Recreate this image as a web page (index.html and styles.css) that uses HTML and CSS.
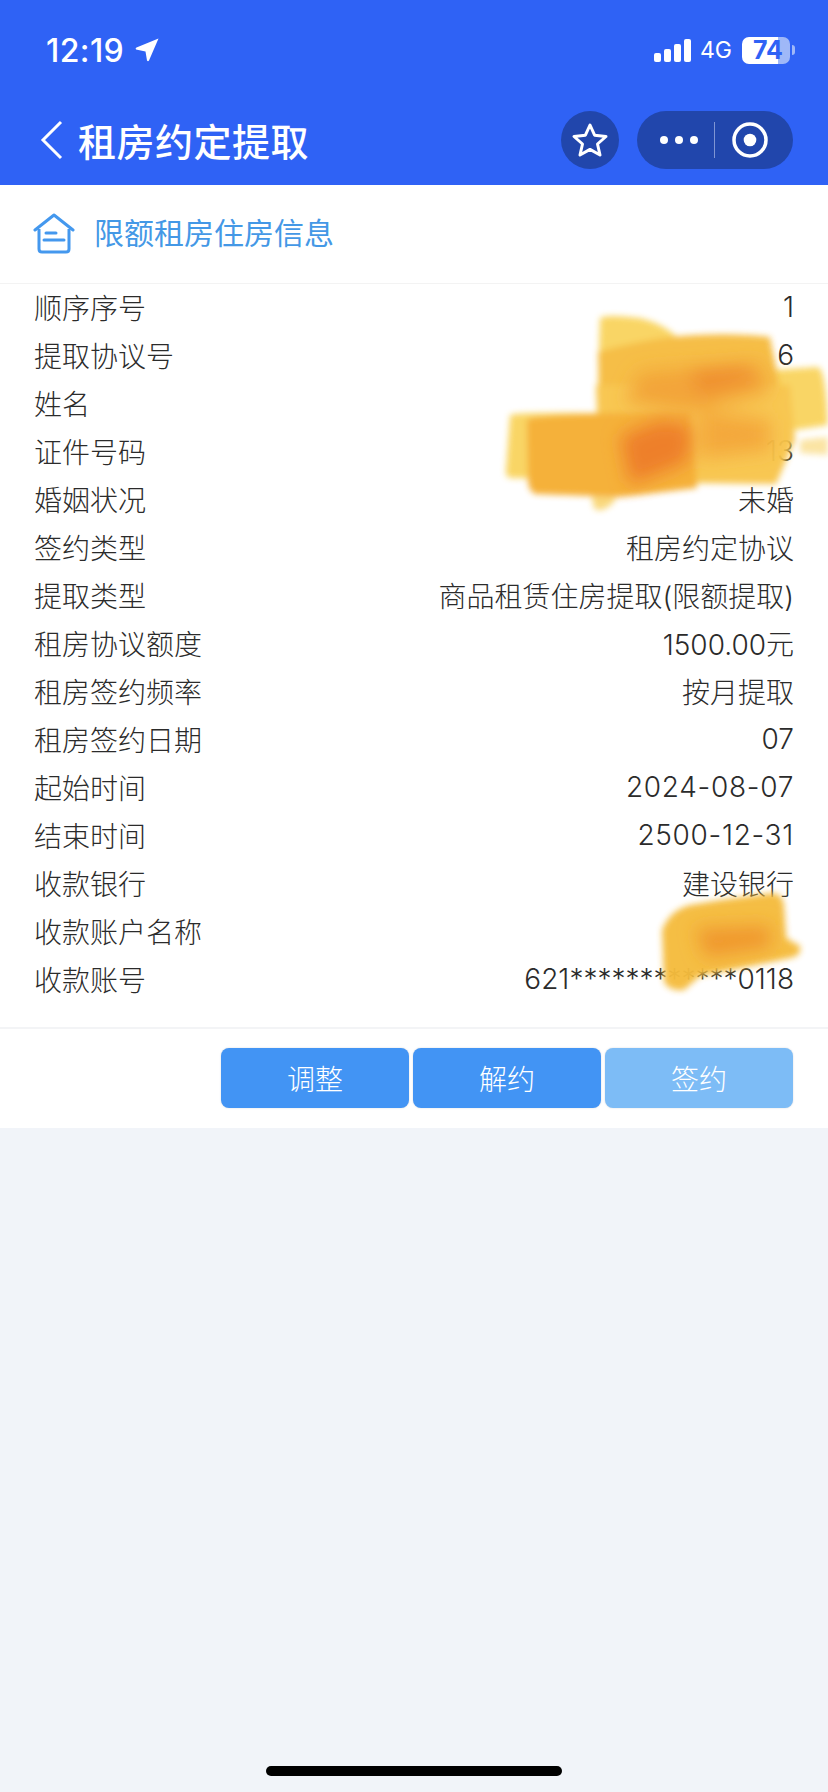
FILE: index.html
```html
<!DOCTYPE html>
<html lang="zh-CN">

<head>
    <meta charset="UTF-8" />
    <title>租房约定提取</title>
    <link rel="stylesheet" href="styles.css">
</head>

<body>
    <div class="page">
        <div class="topbar">
            <div class="status">
                <div class="status-left">
                    <span class="time">12:19</span>
                    <svg class="arrow" width="26" height="26" viewBox="0 0 26 26">
                        <path d="M24.500 1.500 L15 23.500 Q14 25 13 23.500 L11.500 14.500 L2 12.500 Q1 11 2.500 10.500 Z" fill="#fff" />
                    </svg>
                </div>
                <div class="status-right">
                    <div class="signal">
                        <span class="s1"></span>
                        <span class="s2"></span>
                        <span class="s3"></span>
                        <span class="s4"></span>
                    </div>
                    <span class="net">4G</span>
                    <div class="battery">74</div>
                    <span class="nub"></span>
                </div>
            </div>
            <div class="nav">
                <svg class="back" width="24" height="40" viewBox="0 0 24 40">
                    <path d="M21 2 L3 20 L21 38" fill="none" stroke="#fff" stroke-width="3" />
                </svg>
                <h1>租房约定提取</h1>
                <div class="star-btn">
                    <svg width="38" height="36" viewBox="0 0 38 36">
                        <path d="M19 3 L23.600 13.200 L35 14.500 L26.500 22 L29 33 L19 27.400 L9 33 L11.500 22 L3 14.500 L14.400 13.200 Z" fill="none" stroke="#fff" stroke-width="3" stroke-linejoin="round" />
                    </svg>
                </div>
                <div class="capsule">
                    <div class="dots"><i></i><i></i><i></i></div>
                    <span class="sep"></span>
                    <svg width="38" height="38" viewBox="0 0 38 38">
                        <circle cx="19" cy="19" r="16" fill="none" stroke="#fff" stroke-width="3.500" />
                        <circle cx="19" cy="19" r="6.300" fill="#fff" />
                    </svg>
                </div>
            </div>
        </div>

        <div class="card">
            <div class="section-title">
                <svg width="42" height="42" viewBox="0 0 42 42">
                    <path d="M2 18 L21 3 L40 18" fill="none" stroke="#4498ee" stroke-width="3" stroke-linecap="round" stroke-linejoin="round" />
                    <path d="M6 17 V37 Q6 40 9 40 H33 Q36 40 36 37 V17" fill="none" stroke="#4498ee" stroke-width="3" />
                    <path d="M13 21 H23 M11 28 H31" fill="none" stroke="#4498ee" stroke-width="3" stroke-linecap="round" />
                </svg>
                <span class="section-name">限额租房住房信息</span>
            </div>

            <div class="rows">
                <div class="row"><span>顺序序号</span><span>1</span></div>
                <div class="row"><span>提取协议号</span><span>6</span></div>
                <div class="row"><span>姓名</span><span></span></div>
                <div class="row"><span>证件号码</span><span>13</span></div>
                <div class="row"><span>婚姻状况</span><span>未婚</span></div>
                <div class="row"><span>签约类型</span><span>租房约定协议</span></div>
                <div class="row"><span>提取类型</span><span>商品租赁住房提取(限额提取)</span></div>
                <div class="row"><span>租房协议额度</span><span>1500.00元</span></div>
                <div class="row"><span>租房签约频率</span><span>按月提取</span></div>
                <div class="row"><span>租房签约日期</span><span>07</span></div>
                <div class="row"><span>起始时间</span><span class="date">2024-08-07</span></div>
                <div class="row"><span>结束时间</span><span class="date">2500-12-31</span></div>
                <div class="row"><span>收款银行</span><span>建设银行</span></div>
                <div class="row"><span>收款账户名称</span><span></span></div>
                <div class="row"><span>收款账号</span><span>621************0118</span></div>
            </div>

            <div class="actions">
                <button>调整</button>
                <button>解约</button>
                <button class="off">签约</button>
            </div>
        </div>

        <div class="home-bar"><span></span></div>

        <!-- painted-over parts of the screenshot -->
        <svg class="smear" width="828" height="1100" viewBox="0 0 828 1100">
            <defs>
                <filter id="soft" x="-10%" y="-10%" width="120%" height="120%"><feGaussianBlur stdDeviation="3" /></filter>
                <filter id="softer" x="-20%" y="-20%" width="140%" height="140%"><feGaussianBlur stdDeviation="9" /></filter>
            </defs>
            <g filter="url(#soft)">
                <path d="M600 318 Q606 314 640 318 Q665 324 680 340 L690 385 L598 385 Z" fill="#f9d45e" />
                <path d="M775 370 L818 367 Q826 370 828 425 L782 432 Z" fill="#f9d45e" />
                <path d="M800 440 L828 437 V455 L800 453 Z" fill="#fbe3a0" />
                <path d="M510 416 Q505 412 600 413 L606 480 L512 478 Q505 478 506 470 Z" fill="#f9d45e" />
                <path d="M590 490 L628 482 L612 504 Q600 514 594 508 Z" fill="#f9d778" />
                <path d="M598 352 Q640 340 680 336 Q730 332 770 337 L782 400 L770 420 L600 400 Z" fill="#f6bc40" />
                <path d="M596 385 H790 L795 440 L776 484 L600 482 Z" fill="#f8c54c" />
                <path d="M527 420 Q530 414 690 412 L697 488 L620 497 L535 494 Q528 490 528 480 Z" fill="#f5ae33" />
                <path d="M662 930 Q670 910 690 905 L720 900 L772 893 Q782 893 784 905 L786 938 L800 946 Q802 956 790 958 L770 962 L700 976 L684 990 Q670 992 664 982 Z" fill="#f5bc3c" />
            </g>
            <g filter="url(#softer)">
                <path d="M640 372 L760 362 L770 392 L690 412 L625 402 Z" fill="#f3a232" />
                <path d="M690 370 L745 365 L755 380 L700 395 Z" fill="#ef8a28" />
                <path d="M620 436 L660 420 L692 425 L688 462 L630 485 Z" fill="#ee7a20" />
                <path d="M700 410 L770 420 L770 450 L700 458 Z" fill="#f4a636" />
                <path d="M695 928 L770 925 L772 948 L705 958 Z" fill="#f09526" />
            </g>
        </svg>
    </div>
</body>

</html>
```

FILE: styles.css
```css
* {
    box-sizing: border-box;
}

body {
    margin: 0;
    background: #f1f4f9;
    font-family: Inter, "Noto Sans CJK SC", sans-serif;
}

.page {
    position: relative;
    width: 828px;
    height: 1792px;
    display: flex;
    flex-direction: column;
    overflow: hidden;
}

.topbar {
    height: 185px;
    background: #2f62f5;
    color: #fff;
}

.status {
    height: 88px;
    padding: 12px 33px 0 46px;
    display: flex;
    justify-content: space-between;
    align-items: center;
}

.status-left {
    display: flex;
    align-items: center;
    gap: 10px;
}

.time {
    font-size: 32px;
    font-weight: 500;
    letter-spacing: 0.4px;
}

.status-right {
    display: flex;
    align-items: center;
}

.signal {
    display: flex;
    align-items: flex-end;
    gap: 3px;
    height: 23px;
}

.signal span {
    width: 7px;
    background: #fff;
    border-radius: 2px;
}

.s1 { height: 9px; }
.s2 { height: 13px; }
.s3 { height: 18px; }
.s4 { height: 23px; }

.net {
    margin-left: 9px;
    font-size: 23px;
}

.battery {
    margin-left: 10px;
    width: 48px;
    height: 27px;
    border-radius: 7px;
    background: linear-gradient(to right, #fff 75%, #9fb8f8 75%);
    color: #2f62f5;
    font-size: 25px;
    font-weight: 700;
    line-height: 27px;
    text-align: center;
    padding-left: 4px;
}

.nub {
    margin-left: 2px;
    width: 3px;
    height: 10px;
    border-radius: 0 3px 3px 0;
    background: #9fb8f8;
}

.nav {
    height: 97px;
    padding: 7px 35px 0 40px;
    display: flex;
    align-items: center;
}

.back {
    flex: none;
}

h1 {
    margin: 0 0 2px 14px;
    flex: 1;
    font-size: 38px;
    font-weight: 500;
    letter-spacing: 0.5px;
}

.star-btn {
    width: 58px;
    height: 58px;
    border-radius: 50%;
    background: #2146ac;
    display: flex;
    align-items: center;
    justify-content: center;
}

.capsule {
    margin-left: 18px;
    width: 156px;
    height: 58px;
    border-radius: 29px;
    background: #2146ac;
    display: flex;
    align-items: center;
    padding-left: 23px;
}

.dots {
    display: flex;
    gap: 7px;
}

.dots i {
    width: 8px;
    height: 8px;
    border-radius: 50%;
    background: #fff;
}

.sep {
    width: 1px;
    height: 36px;
    margin: 0 16px;
    background: #7f95d4;
}

.card {
    background: #fff;
}

.section-title {
    height: 99px;
    padding: 0 0 3px 33px;
    display: flex;
    align-items: center;
    gap: 19px;
    border-bottom: 1px solid #f3f3f3;
    color: #4498e6;
    font-size: 30px;
}

.section-name {
    margin-bottom: 4px;
}

.rows {
    padding: 0 34px 23px;
    border-bottom: 2px solid #f3f4f6;
}

.row {
    height: 48px;
    padding-bottom: 2px;
    display: flex;
    justify-content: space-between;
    align-items: center;
    color: #2b2b2b;
    font-size: 28px;
    font-weight: 300;
}

.date {
    letter-spacing: 0.7px;
}

.actions {
    height: 99px;
    padding: 0 35px 1px 0;
    display: flex;
    justify-content: flex-end;
    align-items: center;
    gap: 4px;
}

.actions button {
    width: 188px;
    height: 60px;
    border: none;
    border-radius: 8px;
    background: #4294f4;
    color: #fff;
    font-family: inherit;
    font-size: 28px;
    font-weight: 300;
    box-shadow: 0 0 2px #d5d8dc;
}

.actions .off {
    background: #7dbcf6;
}

.home-bar {
    margin-top: auto;
    height: 26px;
    display: flex;
    justify-content: center;
}

.home-bar span {
    width: 296px;
    height: 10px;
    border-radius: 5px;
    background: #000;
}

.smear {
    position: absolute;
    left: 0;
    top: 0;
    opacity: 0.96;
}
```
